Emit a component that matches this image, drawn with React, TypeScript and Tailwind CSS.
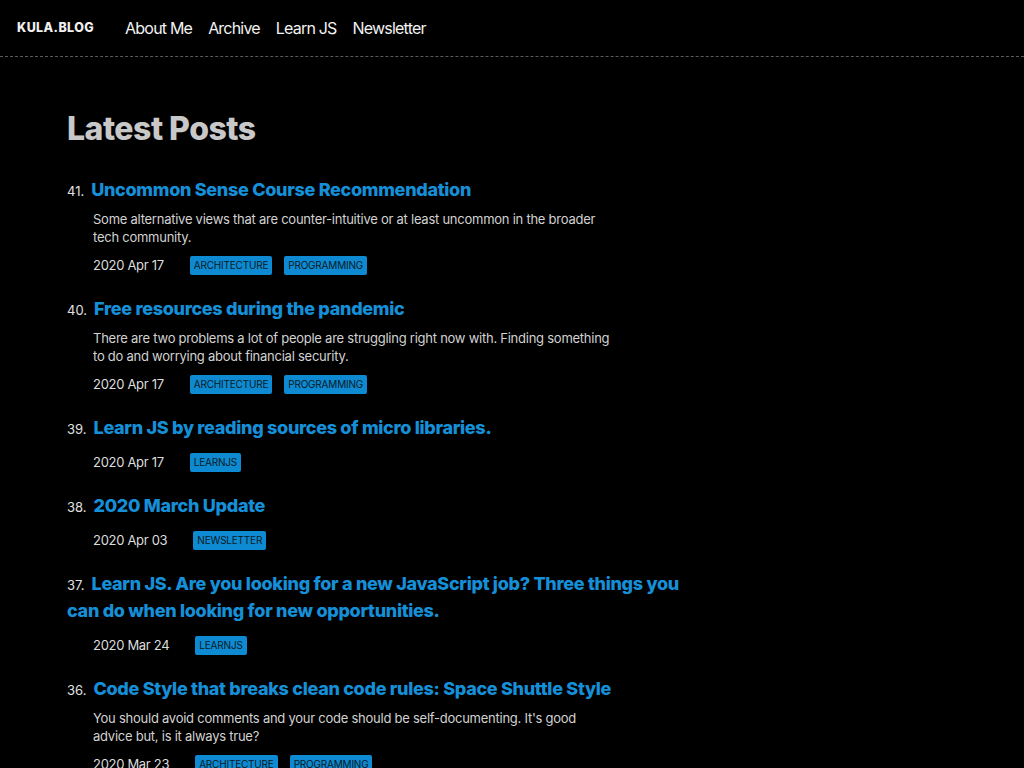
import React from 'react'

type Post = {
  n: number
  title: string
  desc?: string
  date: string
  tags: string[]
}

const posts: Post[] = [
  {
    n: 41,
    title: 'Uncommon Sense Course Recommendation',
    desc: 'Some alternative views that are counter-intuitive or at least uncommon in the broader tech community.',
    date: '2020 Apr 17',
    tags: ['architecture', 'programming'],
  },
  {
    n: 40,
    title: 'Free resources during the pandemic',
    desc: 'There are two problems a lot of people are struggling right now with. Finding something to do and worrying about financial security.',
    date: '2020 Apr 17',
    tags: ['architecture', 'programming'],
  },
  {
    n: 39,
    title: 'Learn JS by reading sources of micro libraries.',
    date: '2020 Apr 17',
    tags: ['learnjs'],
  },
  {
    n: 38,
    title: '2020 March Update',
    date: '2020 Apr 03',
    tags: ['newsletter'],
  },
  {
    n: 37,
    title: 'Learn JS. Are you looking for a new JavaScript job? Three things you can do when looking for new opportunities.',
    date: '2020 Mar 24',
    tags: ['learnjs'],
  },
  {
    n: 36,
    title: 'Code Style that breaks clean code rules: Space Shuttle Style',
    desc: "You should avoid comments and your code should be self-documenting. It's good advice but, is it always true?",
    date: '2020 Mar 23',
    tags: ['architecture', 'programming'],
  },
]

export default function App() {
  return (
    <div className="min-h-screen bg-black font-['Inter','Liberation_Sans',sans-serif] text-[#e6e6e6]">
      {/* Header */}
      <header className="flex h-[57px] items-center border-b border-dashed border-[#5a5a5a] px-[17px]">
        <a className="text-[12.5px] font-extrabold tracking-[0.4px] text-[#f0f0f0]">KULA.BLOG</a>
        <nav className="ml-[31px] flex items-center gap-4 text-[16px] tracking-[-0.8px] text-[#f2f2f2]">
          <a>About Me</a>
          <a>Archive</a>
          <a>Learn JS</a>
          <a>Newsletter</a>
        </nav>
      </header>

      <main className="px-[67px] pt-[52px]">
        <h1 className="text-[32px] font-extrabold leading-[40px] tracking-[-0.5px] text-[#c8c8c8]">Latest Posts</h1>

        <ol className="mt-[26px] flex w-[628px] flex-col gap-[19px]">
          {posts.map((p) => (
            <li key={p.n}>
              <h2 className="py-[1px] text-[18px] font-extrabold leading-[27px] tracking-[-0.3px] text-[#1590d8]">
                <span className="mr-[7px] text-[13px] font-normal leading-none tracking-normal text-[#e0e0e0]">{p.n}.</span>
                {p.title}
              </h2>
              {p.desc && (
                <p className="mt-[6px] w-[545px] pl-[26px] text-[13px] leading-[18px] tracking-[-0.25px] text-[#d2d2d2]">
                  {p.desc}
                </p>
              )}
              <div className={`flex items-center pl-[26px] ${p.desc ? 'mt-[10px]' : 'mt-[11px]'}`}>
                <span className="text-[13px] leading-[19px] tracking-[-0.3px] text-[#dddddd]">{p.date}</span>
                <div className="ml-[26px] flex gap-3">
                  {p.tags.map((t) => (
                    <span
                      key={t}
                      className="rounded-[2px] bg-[#0d8ad2] px-[4px] text-[10px] uppercase leading-[19px] tracking-[-0.2px] text-[#0a1a24]"
                    >
                      {t}
                    </span>
                  ))}
                </div>
              </div>
            </li>
          ))}
        </ol>
      </main>
    </div>
  )
}
